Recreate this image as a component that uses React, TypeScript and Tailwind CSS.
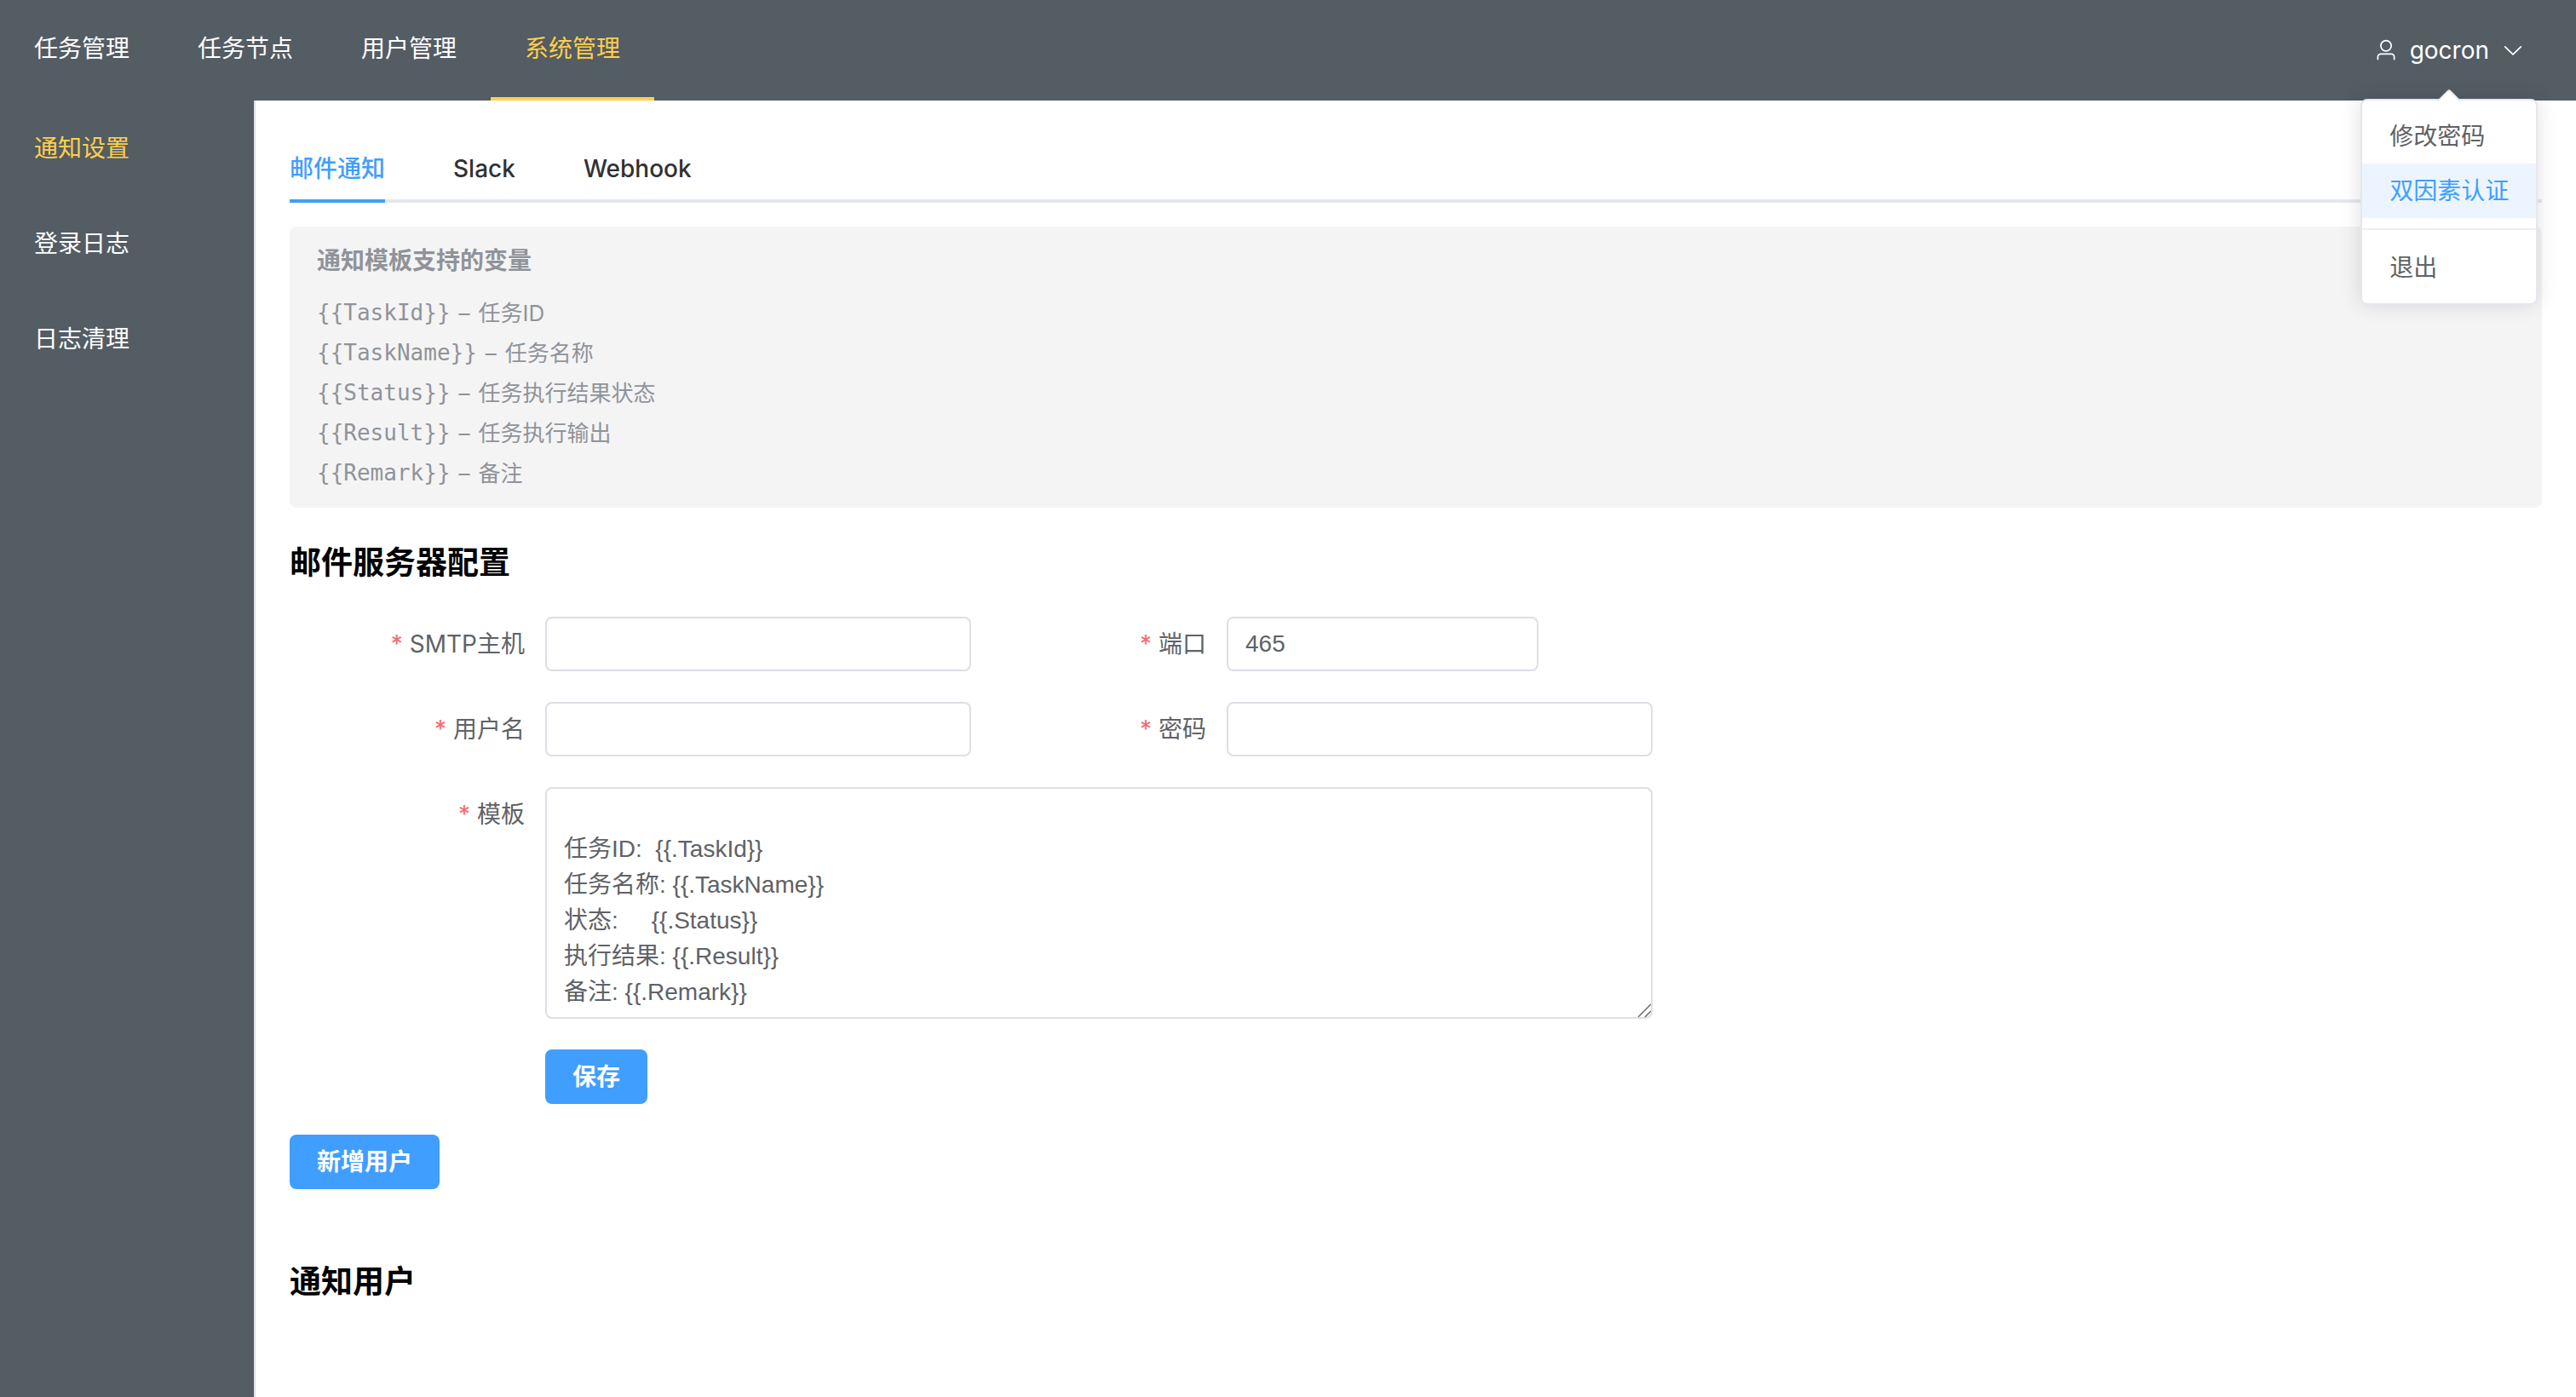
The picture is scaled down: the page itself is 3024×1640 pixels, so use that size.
import { useState } from "react";

const navItems = ["任务管理", "任务节点", "用户管理", "系统管理"];
const sideItems = ["通知设置", "登录日志", "日志清理"];
const tabs = ["邮件通知", "Slack", "Webhook"];

const variables = [
  { name: "{{TaskId}}", desc: "任务ID" },
  { name: "{{TaskName}}", desc: "任务名称" },
  { name: "{{Status}}", desc: "任务执行结果状态" },
  { name: "{{Result}}", desc: "任务执行输出" },
  { name: "{{Remark}}", desc: "备注" },
];

const defaultTemplate = `
任务ID:  {{.TaskId}}
任务名称: {{.TaskName}}
状态:     {{.Status}}
执行结果: {{.Result}}
备注: {{.Remark}}`;

const fieldClass =
  "w-full min-w-0 rounded-lg border-2 border-[#dcdfe6] bg-white px-5 font-['Liberation_Sans','Noto_Sans_CJK_SC',sans-serif] text-[#606266] outline-none focus:border-[#409eff]";

const UserIcon = () => (
  <svg viewBox="0 0 1024 1024" className="size-7" fill="currentColor" aria-hidden="true">
    <path d="M512 512a192 192 0 1 0 0-384 192 192 0 0 0 0 384m0 64a256 256 0 1 1 0-512 256 256 0 0 1 0 512m320 320v-96a96 96 0 0 0-96-96H288a96 96 0 0 0-96 96v96a32 32 0 1 1-64 0v-96a160 160 0 0 1 160-160h448a160 160 0 0 1 160 160v96a32 32 0 1 1-64 0" />
  </svg>
);

const ArrowDownIcon = () => (
  <svg viewBox="0 0 1024 1024" className="size-7" fill="currentColor" aria-hidden="true">
    <path d="M831.872 340.864 512 652.672 192.128 340.864a30.592 30.592 0 0 0-42.752 0 29.12 29.12 0 0 0 0 41.6L489.664 714.24a32 32 0 0 0 44.672 0l340.288-331.712a29.12 29.12 0 0 0 0-41.728 30.592 30.592 0 0 0-42.752 0z" />
  </svg>
);

const FieldLabel = ({ htmlFor, text }: { htmlFor: string; text: string }) => (
  <label htmlFor={htmlFor} className="flex h-16 w-[300px] shrink-0 items-center justify-end gap-2 pr-6 text-[#606266]">
    <span className="text-[#f56c6c]">*</span>
    <span>{text}</span>
  </label>
);

const UserMenu = () => {
  const [open, setOpen] = useState(true);

  return (
    <div className="relative mr-[60px] flex items-center">
      <button type="button" onClick={() => setOpen(!open)} className="flex items-center gap-3.5 text-white">
        <UserIcon />
        <span>gocron</span>
        <ArrowDownIcon />
      </button>

      {open && (
        <div className="absolute top-[116px] left-1/2 z-10 -translate-x-1/2 rounded-lg border-2 border-[#e4e7ed] bg-white text-[#606266] shadow-[0_0_24px_rgba(0,0,0,0.12)]">
          <div className="absolute -top-[10px] left-1/2 size-5 -translate-x-1/2 rotate-45 rounded-tl border-t-2 border-l-2 border-[#e4e7ed] bg-white" />
          <div className="relative flex flex-col py-[10px] leading-[64px] whitespace-nowrap">
            <button type="button" className="px-8 text-left">修改密码</button>
            <button type="button" className="bg-[#ecf5ff] px-8 text-left text-[#409eff]">双因素认证</button>
            <hr className="my-3 border-t-2 border-[#ebeef5]" />
            <button type="button" className="px-8 text-left">退出</button>
          </div>
        </div>
      )}
    </div>
  );
};

const App = () => {
  const [activeTab, setActiveTab] = useState("邮件通知");
  const [host, setHost] = useState("");
  const [port, setPort] = useState("465");
  const [user, setUser] = useState("");
  const [password, setPassword] = useState("");
  const [template, setTemplate] = useState(defaultTemplate);

  return (
    <div className="flex min-h-screen flex-col bg-white font-['Inter','Noto_Sans_CJK_SC',sans-serif] text-[28px] leading-[42px]">
      <header className="flex h-[118px] justify-between bg-[#545c64]">
        <nav className="flex">
          {navItems.map((item) => (
            <a
              key={item}
              href="#"
              className={`flex items-center border-b-4 px-10 ${
                item === "系统管理" ? "border-[#ffd04b] text-[#ffd04b]" : "border-transparent text-white"
              }`}
            >
              {item}
            </a>
          ))}
        </nav>
        <UserMenu />
      </header>

      <div className="flex flex-1">
        <aside className="w-[300px] shrink-0 border-r-2 border-[#dcdfe6] bg-[#545c64]">
          {sideItems.map((item) => (
            <a
              key={item}
              href="#"
              className={`flex h-28 items-center px-10 ${item === "通知设置" ? "text-[#ffd04b]" : "text-white"}`}
            >
              {item}
            </a>
          ))}
        </aside>

        <main className="min-w-0 flex-1 p-10">
          <div role="tablist" className="flex gap-20 border-b-4 border-[#e4e7ed] font-medium">
            {tabs.map((tab) => (
              <button
                key={tab}
                type="button"
                role="tab"
                aria-selected={tab === activeTab}
                onClick={() => setActiveTab(tab)}
                className={`-mb-1 h-20 border-b-4 pt-1 ${
                  tab === activeTab ? "border-[#409eff] text-[#409eff]" : "border-transparent text-[#303133]"
                }`}
              >
                {tab}
              </button>
            ))}
          </div>

          <section className="mt-7 rounded-lg bg-[#f4f4f5] px-8 pt-4 pb-[17px] text-[#909399]">
            <p className="leading-[48px] font-bold">通知模板支持的变量</p>
            <ul className="mt-3.5 text-[26px] leading-[47px]">
              {variables.map((v) => (
                <li key={v.name} className="flex h-[47px] gap-2.5">
                  <code className="font-['DejaVu_Sans_Mono',monospace]">{v.name}</code>
                  <span>–</span>
                  <span>{v.desc}</span>
                </li>
              ))}
            </ul>
          </section>

          <h3 className="mt-[42px] text-[37px] leading-[46px] font-bold text-black">邮件服务器配置</h3>

          <form className="mt-10 flex max-w-[1600px] flex-col gap-9" onSubmit={(e) => e.preventDefault()}>
            <div className="grid grid-cols-2 gap-y-9">
              <div className="flex">
                <FieldLabel htmlFor="host" text="SMTP主机" />
                <input
                  id="host"
                  type="text"
                  value={host}
                  onChange={(e) => setHost(e.target.value)}
                  className={`${fieldClass} h-16`}
                />
              </div>
              <div className="flex">
                <FieldLabel htmlFor="port" text="端口" />
                <input
                  id="port"
                  type="text"
                  value={port}
                  onChange={(e) => setPort(e.target.value)}
                  className={`${fieldClass} h-16 max-w-[366px]`}
                />
              </div>
              <div className="flex">
                <FieldLabel htmlFor="user" text="用户名" />
                <input
                  id="user"
                  type="text"
                  value={user}
                  onChange={(e) => setUser(e.target.value)}
                  className={`${fieldClass} h-16`}
                />
              </div>
              <div className="flex">
                <FieldLabel htmlFor="password" text="密码" />
                <input
                  id="password"
                  type="password"
                  value={password}
                  onChange={(e) => setPassword(e.target.value)}
                  className={`${fieldClass} h-16`}
                />
              </div>
            </div>

            <div className="flex">
              <FieldLabel htmlFor="template" text="模板" />
              <div className="relative flex min-w-0 flex-1">
                <textarea
                  id="template"
                  rows={6}
                  value={template}
                  onChange={(e) => setTemplate(e.target.value)}
                  className={`${fieldClass} resize-none py-2`}
                />
                {/* resize grip */}
                <svg viewBox="0 0 16 16" className="absolute right-0.5 bottom-0.5 size-4" fill="none" stroke="#6b6b6b" strokeWidth="1.5" aria-hidden="true">
                  <path d="M1 16 16 1M9 16l7-7" />
                </svg>
              </div>
            </div>

            <button type="submit" className="ml-[300px] h-16 self-start rounded-lg bg-[#409eff] px-8 font-bold text-white">
              保存
            </button>
          </form>

          <button type="button" className="mt-9 block h-16 rounded-lg bg-[#409eff] px-8 font-bold text-white">
            新增用户
          </button>

          <h3 className="mt-[86px] text-[37px] leading-[46px] font-bold text-black">通知用户</h3>
        </main>
      </div>
    </div>
  );
};

export default App;
